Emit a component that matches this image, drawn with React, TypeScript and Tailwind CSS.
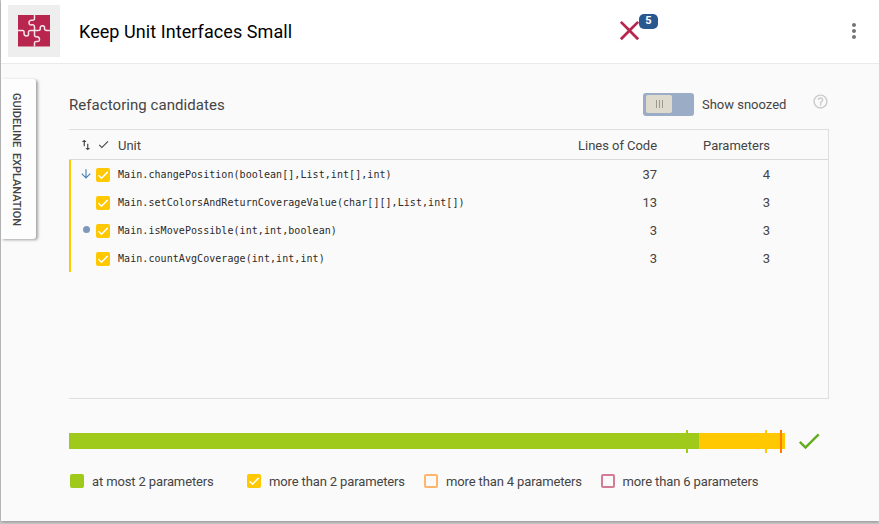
import React from "react";

type CandidateRow = { unit: string; loc: number; params: number; mark?: "down" | "dot" };

const rows: CandidateRow[] = [
  { unit: "Main.changePosition(boolean[],List,int[],int)", loc: 37, params: 4, mark: "down" },
  { unit: "Main.setColorsAndReturnCoverageValue(char[][],List,int[])", loc: 13, params: 3 },
  { unit: "Main.isMovePossible(int,int,boolean)", loc: 3, params: 3, mark: "dot" },
  { unit: "Main.countAvgCoverage(int,int,int)", loc: 3, params: 3 },
];

function Icon({ d, className }: { d: string; className: string }) {
  return (
    <svg viewBox="0 0 24 24" fill="currentColor" className={`shrink-0 ${className}`}>
      <path d={d} />
    </svg>
  );
}

const CHECK = "M9 16.17L4.83 12l-1.42 1.41L9 19 21 7l-1.41-1.41z";
const DOWN = "M20 12l-1.41-1.41L13 16.17V4h-2v12.17l-5.58-5.59L4 12l8 8 8-8z";
const SWAP = "M16 17.01V10h-2v7.01h-3L15 21l4-3.99h-3zM9 3L5 6.99h3V14h2V6.99h3L9 3z";
const CLOSE = "M19 6.41L17.59 5 12 10.59 6.41 5 5 6.41 10.59 12 5 17.59 6.41 19 12 13.41 17.59 19 19 17.59 13.41 12z";
const MORE = "M12 8c1.1 0 2-.9 2-2s-.9-2-2-2-2 .9-2 2 .9 2 2 2zm0 2c-1.1 0-2 .9-2 2s.9 2 2 2 2-.9 2-2-.9-2-2-2zm0 6c-1.1 0-2 .9-2 2s.9 2 2 2 2-.9 2-2-.9-2-2-2z";
const HELP = "M11 18h2v-2h-2v2zm1-16C6.48 2 2 6.48 2 12s4.48 10 10 10 10-4.48 10-10S17.52 2 12 2zm0 18c-4.41 0-8-3.59-8-8s3.59-8 8-8 8 3.59 8 8-3.59 8-8 8zm0-14c-2.21 0-4 1.79-4 4h2c0-1.1.9-2 2-2s2 .9 2 2c0 2-3 1.75-3 5h2c0-2.25 3-2.5 3-5 0-2.21-1.79-4-4-4z";

function CheckedBox() {
  return (
    <span className="flex h-[14px] w-[14px] shrink-0 items-center justify-center rounded-[2px] bg-[#ffc800] text-white">
      <svg viewBox="0 0 14 14" className="h-[14px] w-[14px]">
        <path d="M2.500 7.200L5.500 10.200L11.700 3.900" fill="none" stroke="currentColor" strokeWidth="1.5" />
      </svg>
    </span>
  );
}

function PuzzleLogo() {
  return (
    <div className="flex h-[52px] w-[52px] shrink-0 items-center justify-center bg-[#eee]">
      <svg viewBox="0 0 32 32" className="h-8 w-8">
        <rect width="32" height="31.5" fill="#b8254f" />
        <path
          d="M16.500 0V3.500Q16.500 5.500 14 5.200Q11 5 11 7.700Q11 10.300 14 9.800Q16.500 9.500 16.500 12V20Q16.500 22 19 21.800Q21.500 22 21.500 24.500Q21.500 27 18.500 26.500Q16.500 26.200 16.500 28V31.500M0 15.500H4.500Q6.500 15.500 6 18Q6 21 8.500 21Q11 21 10.500 18Q10 15.500 12.500 15.500H20Q22.800 15.500 22.200 13.200Q22 10.800 24.500 10.800Q27 10.800 26.500 13.500Q26.500 15.500 29 15.500H32"
          fill="none"
          stroke="#f5e4e9"
          strokeWidth="1.5"
        />
      </svg>
    </div>
  );
}

function LegendItem({ label, className, children }: { label: string; className: string; children: React.ReactNode }) {
  return (
    <div className={`flex items-center gap-2 ${className}`}>
      {children}
      <span className="pt-[2px]">{label}</span>
    </div>
  );
}

export default function App() {
  return (
    <div className="h-[524px] w-[879px] overflow-hidden bg-[#ccc] pl-px font-['Roboto',sans-serif] text-[13px] whitespace-nowrap text-[#444]">
      <div className="h-[521px] w-[878px] bg-[#fafafa] shadow-[0_1px_3px_rgba(0,0,0,0.3)]">
        <header className="flex h-16 items-center border-b border-[#eaeaea] bg-white pb-px pl-[7px]">
          <PuzzleLogo />
          <h1 className="ml-[19px] w-[534px] text-[18px] tracking-[0.07px] text-black">Keep Unit Interfaces Small</h1>
          <div className="flex w-[48px] items-center">
            <Icon d={CLOSE} className="-mt-px h-[33px] w-[33px] text-[#b8254f]" />
            <span className="-ml-[7px] mb-[19px] flex h-[15px] w-[19px] shrink-0 items-center justify-center rounded-[5px] bg-[#29578f] text-[11px] font-bold text-white">5</span>
          </div>
          <Icon d={MORE} className="ml-[181px] h-6 w-6 text-[#757575]" />
        </header>

        <div className="flex">
          <aside className="mt-[15px] flex h-[160px] w-[35px] shrink-0 items-center justify-center rounded-r-[3px] bg-[#fdfdfd] pt-[2px] pr-[5px] shadow-[2px_1px_3px_rgba(0,0,0,0.35)]">
            <span className="text-[11px] font-medium tracking-[-0.01px] [word-spacing:3px] [writing-mode:vertical-rl]">GUIDELINE EXPLANATION</span>
          </aside>

          <main className="ml-[33px] w-[760px]">
            <div className="flex h-[65px] items-center pt-[15px]">
              <h2 className="mt-[2px] w-[574px] text-[15px] tracking-[0.06px]">Refactoring candidates</h2>
              <div className="flex h-[23px] w-[51px] items-center rounded-[3px] bg-[#9aacc6] pl-[3px]">
                <div className="flex h-[18px] w-[26px] items-center justify-center gap-[2px] rounded-[2px] bg-[#dedacd]">
                  <i className="h-2 w-px bg-[#9e9b89]" />
                  <i className="h-2 w-px bg-[#9e9b89]" />
                  <i className="h-2 w-px bg-[#9e9b89]" />
                </div>
              </div>
              <span className="mt-[2px] ml-2 w-[110px] tracking-[-0.01px]">Show snoozed</span>
              <Icon d={HELP} className="mb-[5px] h-[17px] w-[17px] text-[#c9c9c9]" />
            </div>

            <section className="h-[270px] border-y border-r border-[#dedede]">
              <div className="flex h-[30px] items-center border-b border-[#dadada] pt-[2px] pl-[10px]">
                <Icon d={SWAP} className="mb-px h-[14px] w-[14px]" />
                <Icon d={CHECK} className="mb-[2px] ml-1 h-[13px] w-[13px]" />
                <span className="ml-2 w-[459px]">Unit</span>
                <span className="w-[80px] text-right tracking-[-0.04px]">Lines of Code</span>
                <span className="w-[113px] text-right">Parameters</span>
              </div>
              {rows.map((row) => (
                <div key={row.unit} className="flex h-7 items-center border-l-2 border-[#ffc800] pt-[2px] pl-[8px]">
                  <span className="mb-[3px] flex w-[14px] justify-center text-[#4c84b8]">
                    {row.mark === "down" && <Icon d={DOWN} className="-ml-px h-[14px] w-[14px]" />}
                    {row.mark === "dot" && <i className="h-[7px] w-[7px] rounded-full bg-[#7e98bd]" />}
                  </span>
                  <span className="ml-[3px]"><CheckedBox /></span>
                  <span className="mb-px ml-[8px] w-[459px] font-['DejaVu_Sans_Mono',monospace] text-[10px] tracking-[0.06px] text-[#2a2a2a]">{row.unit}</span>
                  <span className="w-[80px] text-right">{row.loc}</span>
                  <span className="w-[113px] text-right">{row.params}</span>
                </div>
              ))}
            </section>

            <div className="mt-[30px] flex h-[23px] items-center">
              <div className="relative flex h-4 w-[716px]">
                <div className="w-[630px] bg-[#9fca1c]" />
                <div className="flex-1 bg-[#ffc800]" />
                <i className="absolute -top-[3px] left-[617px] h-[23px] w-[2px] bg-[#9fca1c]" />
                <i className="absolute -top-[3px] left-[696px] h-[23px] w-[2px] bg-[#ffc800]" />
                <i className="absolute -top-[3px] left-[711px] h-[23px] w-[2px] bg-[#ff7d00]" />
              </div>
              <Icon d={CHECK} className="ml-[10px] h-7 w-7 text-[#64ac1e]" />
            </div>

            <div className="mt-[19px] flex h-5 items-center pl-px tracking-[-0.13px]">
              <LegendItem className="w-[177px]" label="at most 2 parameters">
                <i className="h-[14px] w-[14px] rounded-[2px] bg-[#9fca1c]" />
              </LegendItem>
              <LegendItem className="w-[177px]" label="more than 2 parameters"><CheckedBox /></LegendItem>
              <LegendItem className="w-[176.5px]" label="more than 4 parameters">
                <i className="h-[14px] w-[14px] rounded-[2px] border-2 border-[#ffb56b]" />
              </LegendItem>
              <LegendItem className="w-[177px]" label="more than 6 parameters">
                <i className="h-[14px] w-[14px] rounded-[2px] border-2 border-[#d47c96]" />
              </LegendItem>
            </div>
          </main>
        </div>
      </div>
    </div>
  );
}
